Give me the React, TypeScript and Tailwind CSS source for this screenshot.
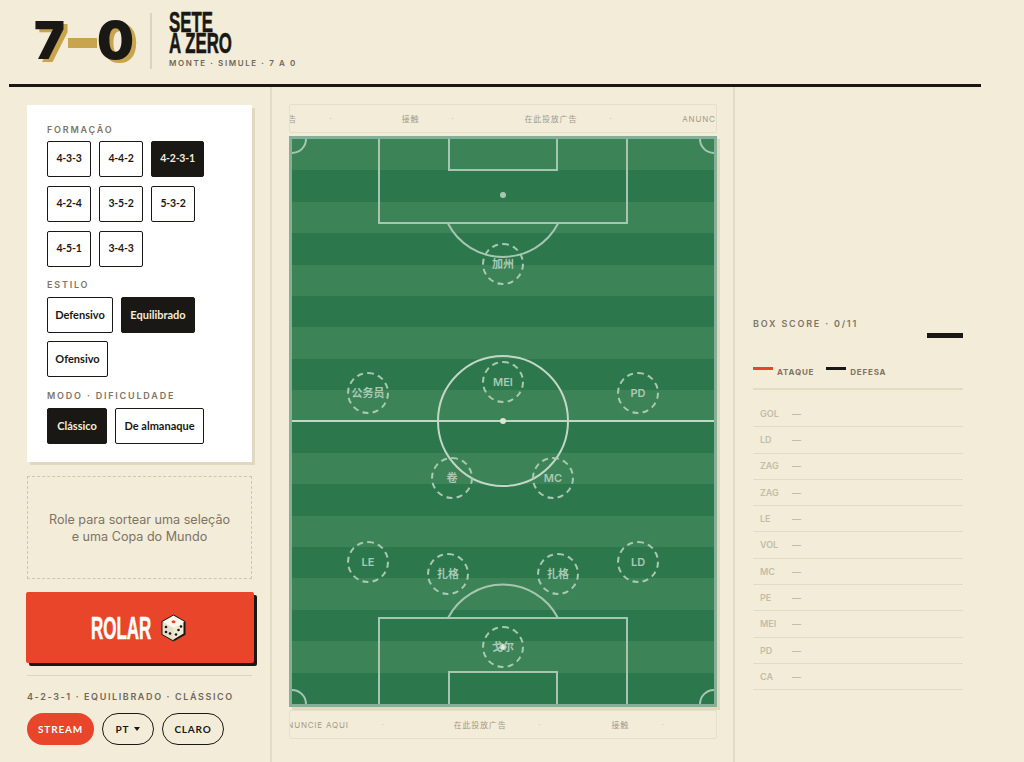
import React from "react";

const tokens = [
  { label: "加州", x: 211, y: 125 },
  { label: "公务员", x: 76, y: 254 },
  { label: "MEI", x: 211, y: 243 },
  { label: "PD", x: 346, y: 254 },
  { label: "卷", x: 160, y: 339 },
  { label: "MC", x: 261, y: 339 },
  { label: "LE", x: 76, y: 423 },
  { label: "扎格", x: 156, y: 435 },
  { label: "扎格", x: 266, y: 435 },
  { label: "LD", x: 346, y: 423 },
  { label: "戈尔", x: 211, y: 508 },
];

const positions = ["GOL", "LD", "ZAG", "ZAG", "LE", "VOL", "MC", "PE", "MEI", "PD", "CA"];

const SectionLabel = ({ children }: { children: React.ReactNode }) => (
  <div className="text-[9px] leading-[11px] font-semibold tracking-[0.2em] text-[#7d7465]">{children}</div>
);

const Choice = ({ label, active, width }: { label: string; active?: boolean; width: string }) => (
  <button
    className={`h-9 rounded-[2px] border-[1.5px] border-[#1a1814] font-['Lato'] text-[11px] font-bold whitespace-nowrap ${width} ${
      active ? "bg-[#1a1814] text-[#f3ecd9]" : "bg-white text-[#1a1814]"
    }`}
  >
    {label}
  </button>
);

const Formation = ({ label, active, width }: { label: string; active?: boolean; width: string }) => (
  <button
    className={`h-9 rounded-[2px] border-[1.5px] border-[#1a1814] font-['Lato'] text-[10.5px] tracking-[-0.02em] font-bold ${width} ${
      active ? "bg-[#1a1814] text-[#f3ecd9]" : "bg-white text-[#1a1814]"
    }`}
  >
    {label}
  </button>
);

const Dice = () => (
  <svg width="25" height="28" viewBox="0 0 25 28">
    <path d="M12.5 1.5 23.5 7.8v12.4L12.5 26.5 1.5 20.2V7.8z" fill="#f1ead6" stroke="#1a1814" strokeWidth="2" strokeLinejoin="round" />
    <path d="M12.5 1.5 23.5 7.8 12.5 14 1.5 7.8z" fill="#fbf8ee" />
    <path d="M12.5 14v12.5L1.5 20.2V7.8z" fill="#e7dfc8" />
    <ellipse cx="12.5" cy="7.8" rx="2" ry="1.5" fill="#e8452a" />
    <circle cx="5" cy="13" r="1.3" fill="#1a1814" />
    <circle cx="9" cy="19.5" r="1.3" fill="#1a1814" />
    <circle cx="5" cy="18" r="1.3" fill="#1a1814" />
    <circle cx="20" cy="12.5" r="1.3" fill="#1a1814" />
    <circle cx="17.5" cy="16" r="1.3" fill="#1a1814" />
    <circle cx="15" cy="20.5" r="1.3" fill="#1a1814" />
  </svg>
);

const AdStrip = ({ items, offset }: { items: string[]; offset: string }) => (
  <div className="h-[29px] border border-[#e6dfca] rounded-[2px] overflow-hidden flex items-center">
    <div className={`flex items-center shrink-0 whitespace-nowrap text-[8px] tracking-[0.1em] text-[#a39a88] ${offset}`}>
      {items.map((item, i) => (
        <React.Fragment key={i}>
          <span className="shrink-0">{item}</span>
          <span className="shrink-0 w-[1px] h-[1px] bg-[#cfc7b0] ml-[33px] mr-[71px]" />
        </React.Fragment>
      ))}
    </div>
  </div>
);

const Pitch = () => (
  <div className="relative w-[428px] h-[571px] border-[3px] border-[#83b096] shadow-[3px_3px_0_#e0d9bf]">
    <div className="flex flex-col h-full">
      {Array.from({ length: 18 }).map((_, i) => (
        <div key={i} className={`flex-1 ${i % 2 === 0 ? "bg-[#3d8358]" : "bg-[#2d774d]"}`} />
      ))}
    </div>
    <svg className="absolute inset-0" width="422" height="565" viewBox="0 0 422 565" fill="none" stroke="#a6c6b0" strokeWidth="2">
      <rect x="87" y="-4" width="248" height="88" />
      <rect x="157" y="-4" width="108" height="35" />
      <path d="M155.7 84A62 62 0 0 0 266.3 84" />
      <circle cx="211" cy="56" r="3" fill="#a6c6b0" stroke="none" />
      <line x1="0" y1="282" x2="422" y2="282" stroke="#c2d7c5" />
      <circle cx="211" cy="282" r="65" stroke="#c2d7c5" />
      <circle cx="211" cy="282" r="3" fill="#dbe5d8" stroke="none" />
      <rect x="87" y="479" width="248" height="90" />
      <rect x="157" y="533" width="108" height="36" />
      <path d="M156 479A62 62 0 0 1 266 479" />
      <circle cx="211" cy="508" r="3" fill="#e6ece0" stroke="none" />
      <path d="M14 0A14 14 0 0 1 0 14" />
      <path d="M408 0A14 14 0 0 0 422 14" />
      <path d="M0 551A14 14 0 0 1 14 565" />
      <path d="M422 551A14 14 0 0 0 408 565" />
    </svg>
    {tokens.map((t, i) => (
      <div
        key={i}
        className="absolute w-[42px] h-[42px] -ml-[21px] -mt-[21px] rounded-full border-2 border-dashed border-[#a9c9b3] flex items-center justify-center text-[11px] font-semibold text-[#a9c9b3]"
        style={{ left: t.x, top: t.y }}
      >
        {t.label}
      </div>
    ))}
  </div>
);

export default function App() {
  return (
    <div
      className="h-[762px] overflow-hidden bg-[#f3ecd9] text-[#1a1814]"
      style={{ fontFamily: 'Inter, "Noto Sans CJK SC", sans-serif' }}
    >
      <div className="w-[972px] ml-[9px] flex flex-col h-full">
        <header className="h-[84px] flex items-center shrink-0 border-b-[3px] border-[#1a1814] box-content">
          <div className="flex items-center -mt-[2px] ml-[25px] w-[116px] text-[52px] leading-none font-black [text-shadow:4px_3px_0_#c9a44e]">
            <span>7</span>
            <span className="w-[29px] h-[10px] ml-[3px] mt-[4px] bg-[#c9a44e]" />
            <span>0</span>
          </div>
          <div className="w-[2px] h-[56px] -mt-[2px] bg-[#ddd5ba]" />
          <div className="ml-[17px] -mt-[4px]">
            <div className="origin-left scale-x-[0.58] w-[120px] text-[29px] leading-[21px] font-bold [-webkit-text-stroke:0.6px_#1a1814]" style={{ fontFamily: '"Liberation Sans", sans-serif' }}>
              SETE
              <br />A ZERO
            </div>
            <div className="mt-[4px] text-[8px] leading-[10px] font-semibold tracking-[0.2em] text-[#6f6859]">MONTE · SIMULE · 7 A 0</div>
          </div>
        </header>

        <div className="flex flex-1 min-h-0">
          <aside className="w-[263px] shrink-0 border-r-2 border-[#e3dcc5] pl-[18px] pr-[18px] pt-[18px]">
            <div className="w-[225px] h-[357px] bg-white shadow-[3px_3px_0_#e0d9bf] px-[20px] pt-[19px]">
              <SectionLabel>FORMAÇÃO</SectionLabel>
              <div className="flex flex-wrap gap-x-2 gap-y-[9px] mt-[6px]">
                <Formation label="4-3-3" width="w-[44px]" />
                <Formation label="4-4-2" width="w-[44px]" />
                <Formation label="4-2-3-1" width="w-[53px]" active />
                <Formation label="4-2-4" width="w-[44px]" />
                <Formation label="3-5-2" width="w-[44px]" />
                <Formation label="5-3-2" width="w-[44px]" />
                <Formation label="4-5-1" width="w-[44px]" />
                <Formation label="3-4-3" width="w-[44px]" />
              </div>
              <div className="mt-[12px]">
                <SectionLabel>ESTILO</SectionLabel>
              </div>
              <div className="flex flex-wrap gap-x-2 mt-[7px] gap-y-2">
                <Choice label="Defensivo" width="w-[66px]" />
                <Choice label="Equilibrado" width="w-[74px]" active />
                <Choice label="Ofensivo" width="w-[61px]" />
              </div>
              <div className="mt-[13px]">
                <SectionLabel>MODO · DIFICULDADE</SectionLabel>
              </div>
              <div className="flex flex-wrap gap-2 mt-[7px]">
                <Choice label="Clássico" width="w-[60px]" active />
                <Choice label="De almanaque" width="w-[89px]" />
              </div>
            </div>

            <div className="w-[225px] h-[103px] mt-[14px] border border-dashed border-[#cfc7ab] flex items-center justify-center text-center text-[12.6px] leading-[17px] text-[#7d7465]">
              <div>
                Role para sortear uma seleção
                <br />e uma Copa do Mundo
              </div>
            </div>

            <button className="w-[228px] h-[71px] -ml-[1px] mt-[13px] bg-[#e8452a] rounded-[2px] shadow-[3px_3px_0_#1a1814] flex items-center justify-center gap-[10px] text-white">
              <span className="w-[60px] -ml-[4px] whitespace-nowrap origin-left scale-x-[0.53] text-[32px] leading-none font-bold [-webkit-text-stroke:0.6px_#ffffff]" style={{ fontFamily: '"Liberation Sans", sans-serif' }}>
                ROLAR
              </span>
              <Dice />
            </button>

            <div className="w-[225px] h-[1px] bg-[#ddd5ba] mt-[12px]" />
            <div className="mt-[15px] text-[9px] leading-[11px] font-semibold tracking-[0.18em] text-[#6f6859] whitespace-nowrap">4-2-3-1 · EQUILIBRADO · CLÁSSICO</div>
            <div className="flex gap-2 mt-[11px] font-['Lato'] text-[10px] font-bold tracking-[0.08em]">
              <button className="w-[67px] h-8 rounded-full bg-[#e8452a] text-white">STREAM</button>
              <button className="w-[52px] h-8 rounded-full border-[1.5px] border-[#1a1814] flex items-center justify-center gap-[5px]">
                PT
                <span className="w-0 h-0 border-x-[3.5px] border-x-transparent border-t-[4px] border-t-[#1a1814]" />
              </button>
              <button className="w-[62px] h-8 rounded-full border-[1.5px] border-[#1a1814]">CLARO</button>
            </div>
          </aside>

          <main className="w-[463px] shrink-0 border-r-2 border-[#e3dcc5] pl-[17px] pt-[17px]">
            <div className="w-[428px]">
              <AdStrip offset="-ml-[46px]" items={["在此投放广告", "接触", "在此投放广告", "ANUNCIE AQUI"]} />
              <div className="h-[3px]" />
              <Pitch />
              <div className="h-[3px]" />
              <AdStrip offset="-ml-[9px]" items={["ANUNCIE AQUI", "在此投放广告", "接触", "ANUNCIE AQUI"]} />
            </div>
          </main>

          <section className="flex-1 pl-[18px] pr-[18px] pt-[231px]">
            <div className="text-[9px] leading-[11px] font-semibold tracking-[0.2em] text-[#7d7465]">BOX SCORE · 0/11</div>
            <div className="flex justify-end mt-[4px]">
              <div className="w-[36px] h-[5px] bg-[#1a1814]" />
            </div>
            <div className="flex items-start mt-[28px] pb-[11px] border-b-2 border-[#e3dcc5] text-[8px] leading-[10px] font-bold tracking-[0.1em] text-[#7d7465]">
              <span className="w-[20px] h-[3px] mt-[1px] bg-[#e8452a]" />
              <span className="ml-[4px] mt-[1px]">ATAQUE</span>
              <span className="w-[20px] h-[3px] mt-[1px] ml-[12px] bg-[#1a1814]" />
              <span className="ml-[4px] mt-[1px]">DEFESA</span>
            </div>
            <div className="mt-[11px]">
              {positions.map((p, i) => (
                <div key={i} className="h-[26.3px] pl-[7px] flex items-center border-b border-[#e3dcc5] text-[9px] font-semibold text-[#c3bca7]">
                  <span className="w-[32px]">{p}</span>
                  <span>—</span>
                </div>
              ))}
            </div>
          </section>
        </div>
      </div>
    </div>
  );
}
